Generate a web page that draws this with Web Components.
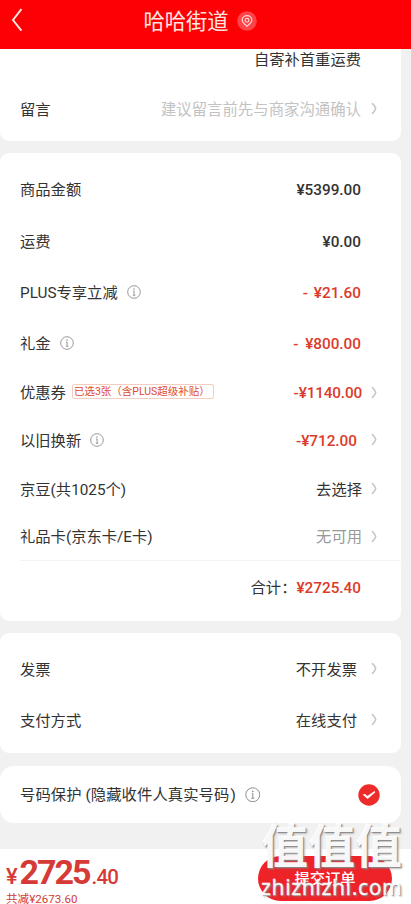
<!DOCTYPE html>
<html lang="zh-CN">
<head>
<meta charset="utf-8">
<title>确认订单</title>
<style>
html,body{margin:0;height:100%;overflow:hidden;background:#f1f1f1}
body{font-family:Roboto,"Noto Sans CJK SC",sans-serif;font-size:15.3px;color:#333}
</style>
</head>
<body>
<order-page></order-page>
<script>
class Base extends HTMLElement {
  connectedCallback() {
    if (this.shadowRoot) return;
    this.attachShadow({ mode: 'open' }).innerHTML = this.render();
  }
}

customElements.define('info-icon', class extends Base {
  render() {
    return `<style>:host{display:block;width:var(--s,14px);height:var(--s,14px);flex:none;position:relative;top:-1px}svg{display:block}</style>
    <svg width="100%" height="100%" viewBox="0 0 14 14" fill="none" stroke="#8d8d8d"><circle cx="7" cy="7" r="6.3" stroke-width=".9"/><path d="M6 6h1.1v4.2M5.8 10.2h2.6" stroke-width=".9"/><circle cx="7" cy="4" r=".75" fill="#8d8d8d" stroke="none"/></svg>`;
  }
});

customElements.define('chevron-icon', class extends Base {
  render() {
    return `<style>:host{display:block;width:7px;height:13px;flex:none}svg{display:block}</style>
    <svg width="7" height="13" viewBox="0 0 7 13" fill="none" stroke="#c6c6c6" stroke-width="1.6"><path d="M1 1.2Q3.8 3.6 4.7 6.5Q3.8 9.4 1 11.8"/></svg>`;
  }
});

customElements.define('page-header', class extends Base {
  render() {
    return `<style>
    :host{display:grid;grid-template-columns:40px 1fr 40px;height:49px;background:#fc0004;color:#ffe4e0;box-sizing:border-box;padding-bottom:7px;align-items:center}
    .back{margin-left:11px;display:block;margin-top:-2px}
    .title{display:flex;align-items:center;justify-content:center;gap:8px;font-size:21.3px;line-height:30px;padding-right:12px;padding-left:1px}
    .title span{position:relative;top:1px}
    .pin{display:block}
    </style>
    <svg class="back" width="12" height="24" viewBox="0 0 12 24" fill="none" stroke="#ffe9e6" stroke-width="1.9"><path d="M10.4 1.2 2 12l8.4 10.6"/></svg>
    <div class="title"><span><slot></slot></span>
    <svg class="pin" width="20" height="20" viewBox="0 0 20 20" fill="none" stroke="#ffd9d6"><circle cx="10" cy="10" r="9.8" fill="#ff4348" stroke="none"/><path d="M10 15.3C7.8 13.6 5.2 11.6 5.2 9.1a4.8 4.4 0 0 1 9.6 0C14.8 11.6 12.2 13.6 10 15.3Z" stroke-width="1.2"/><circle cx="10" cy="9.3" r="1.9" stroke-width="1.1"/></svg></div>`;
  }
});

customElements.define('info-card', class extends Base {
  render() {
    return `<style>:host{display:block;background:#fff;border-radius:9px;width:401px;box-sizing:border-box}</style><slot></slot>`;
  }
});

customElements.define('order-row', class extends Base {
  render() {
    return `<style>
    :host{display:flex;align-items:center;height:var(--h,51px);padding-left:20px;padding-right:40px;box-sizing:border-box;white-space:nowrap;line-height:22px}
    :host([arrow]){padding-right:23px}
    .label{display:flex;align-items:center;gap:9px}
    .value{margin-left:auto;color:var(--c,#333)}
    :host([price]) .value{font-weight:500}
    :host([red]){--c:#dc3a2a}
    :host([muted]){--c:#999}
    :host([hint]){--c:#c3c3c3}
    chevron-icon{margin-left:var(--g,9px);position:relative;top:-1px}
    </style>
    <div class="label"><slot></slot></div><div class="value"><slot name="value"></slot></div>${this.hasAttribute('arrow') ? '<chevron-icon></chevron-icon>' : ''}`;
  }
});

customElements.define('coupon-tag', class extends Base {
  render() {
    return `<style>:host{display:block;margin-left:-3px;margin-top:-3px;width:142px;height:15px;box-sizing:border-box;border:1px solid #f3cdc2;border-radius:2px;color:#e0492e;font-size:10.5px;line-height:13px;padding-left:1px;white-space:nowrap}</style><slot></slot>`;
  }
});

customElements.define('check-mark', class extends Base {
  render() {
    return `<style>:host{display:block;width:22px;height:22px}svg{display:block}</style>
    <svg width="22" height="22" viewBox="0 0 22 22"><circle cx="11" cy="11" r="10.7" fill="#ee2b2b"/><path d="M4.6 10.6 7 10 9.3 11.9 16.6 7 17.3 8.3 9.6 15Z" fill="#fff"/></svg>`;
  }
});

customElements.define('submit-bar', class extends Base {
  render() {
    return `<style>
    :host{display:flex;justify-content:space-between;align-items:flex-start;height:55px;background:#fff;color:#d63a36;box-sizing:border-box;padding:7px 19px 0 6px;overflow:hidden}
    .sum{display:flex;align-items:baseline;font-weight:500;white-space:nowrap;height:31px;line-height:31px;padding-top:0}
    .y{font-size:22px;width:13.5px}
    .big{font-size:34px;font-weight:700;letter-spacing:-2px}
    .dec{font-size:20.5px;letter-spacing:-.8px;margin-left:2px}
    .off{font-size:11.6px;line-height:15px;white-space:nowrap;padding-top:4px}
    .btn{width:134px;height:45px;border-radius:23px;background:#ee2328;color:#fff;font-size:15.3px;line-height:20px;font-weight:500;display:flex;align-items:center;justify-content:center}
    .left{padding-top:2px;margin-top:-1px}
    </style>
    <div class="left"><div class="sum"><span class="y">¥</span><span class="big">2725</span><span class="dec">.40</span></div><div class="off">共减¥2673.60</div></div>
    <div class="btn">提交订单</div>`;
  }
});

customElements.define('water-mark', class extends Base {
  render() {
    return `<style>
    :host{position:absolute;left:261px;top:819px;width:145px;color:#fffffff0;text-shadow:1px 1px 1px #888,2px 2px 2px #8886;white-space:nowrap;pointer-events:none}
    .a{font-size:47px;line-height:56px;font-weight:700}
    .b{font-family:"Noto Sans",sans-serif;font-size:21px;line-height:24px;letter-spacing:.65px;-webkit-text-stroke:.3px #fff}
    </style><div class="a">值值值</div><div class="b">zhizhizhi.com</div>`;
  }
});

customElements.define('order-page', class extends Base {
  render() {
    return `<style>
    :host{display:flex;flex-direction:column;width:411px;height:904px;overflow:hidden;position:relative}
    .c1{height:92px;border-radius:0 0 9px 9px;margin-bottom:12px}
    .c2{height:468px;padding-top:11px;margin-bottom:12px}
    .c3{height:120px;padding-top:11px;margin-bottom:13px}
    .c4{height:57px;border-radius:14px;margin-bottom:26px}
    hr{border:0;height:1px;background:#f3f3f3;margin:0 0 0 20px}
    .total{display:flex;justify-content:flex-end;align-items:baseline;line-height:22px;padding:16px 40px 0 0}
    .total b{font-weight:500;color:#dc3a2a}
    .protect{letter-spacing:.1px}
    check-mark{margin-right:-19px}
    </style>
    <page-header>哈哈街道</page-header>
    <info-card class="c1">
      <order-row style="--h:22px"><span slot="value">自寄补首重运费</span></order-row>
      <order-row hint arrow style="--h:77px;--g:10px">留言<span slot="value" style="font-size:15.4px">建议留言前先与商家沟通确认</span></order-row>
    </info-card>
    <info-card class="c2">
      <order-row price style="--h:52px">商品金额<span slot="value">¥5399.00</span></order-row>
      <order-row price>运费<span slot="value">¥0.00</span></order-row>
      <order-row price red>PLUS专享立减<info-icon></info-icon><span slot="value" style="word-spacing:2px">- ¥21.60</span></order-row>
      <order-row price red style="--h:52px">礼金<info-icon></info-icon><span slot="value" style="word-spacing:3px">- ¥800.00</span></order-row>
      <order-row price red arrow style="--h:46px">优惠券<coupon-tag>已选3张（含PLUS超级补贴）</coupon-tag><span slot="value" style="letter-spacing:-.15px">-¥1140.00</span></order-row>
      <order-row price red arrow style="--h:49px;--g:14px">以旧换新<info-icon></info-icon><span slot="value">-¥712.00</span></order-row>
      <order-row arrow style="--h:49px">京豆(共1025个)<span slot="value">去选择</span></order-row>
      <order-row muted arrow style="--h:46px">礼品卡(京东卡/E卡)<span slot="value">无可用</span></order-row>
      <hr>
      <div class="total"><span>合计：</span><b>¥2725.40</b></div>
    </info-card>
    <info-card class="c3">
      <order-row arrow style="--g:14px">发票<span slot="value">不开发票</span></order-row>
      <order-row arrow style="--g:14px">支付方式<span slot="value">在线支付</span></order-row>
    </info-card>
    <info-card class="c4">
      <order-row style="--h:57px"><span class="protect">号码保护 (隐藏收件人真实号码<span style="margin-left:1px">)</span></span><info-icon style="--s:15.5px;top:0"></info-icon><check-mark slot="value"></check-mark></order-row>
    </info-card>
    <submit-bar></submit-bar>
    <water-mark></water-mark>`;
  }
});
</script>
</body>
</html>
